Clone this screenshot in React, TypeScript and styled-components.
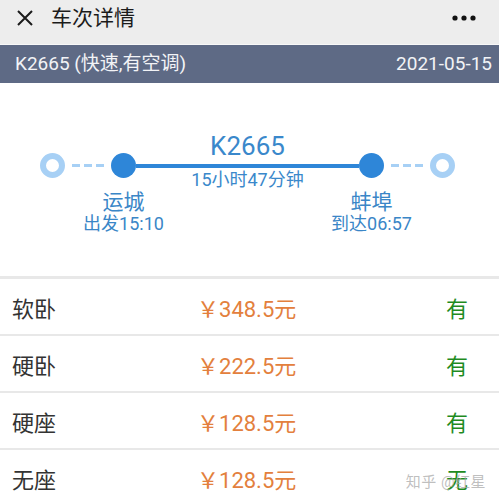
import React from "react";
import styled, { createGlobalStyle } from "styled-components";

const FONT = `Roboto, "Noto Sans CJK SC", sans-serif`;

const GlobalStyle = createGlobalStyle`
  html, body {
    margin: 0;
    padding: 0;
    background: #ffffff;
  }
  body {
    font-family: ${FONT};
    overflow: hidden;
  }
`;

const S = {
    Page: styled.div`
      position: relative;
      width: 499px;
      height: 503px;
      overflow: hidden;
      background: #fff;
    `,
    TopBar: styled.header`
      height: 45px;
      box-sizing: border-box;
      padding: 0 23px 9px 16px;
      display: flex;
      align-items: center;
      background: #ededed;
      border-bottom: 1px solid #f8f8f8;
    `,
    Title: styled.h1`
      margin: 0 0 0 17px;
      flex: 1;
      font-size: 21px;
      font-weight: 400;
      line-height: 26px;
      color: #1b1b1b;
    `,
    TrainBar: styled.div`
      height: 38px;
      padding: 0 7px 0 15px;
      display: flex;
      align-items: center;
      justify-content: space-between;
      background: #5e6a85;
      color: #f2f3f6;
      font-size: 19px;
      line-height: 24px;
    `,
    Route: styled.section`
      height: 196px;
      box-sizing: border-box;
      padding: 50px 44px 0 40px;
      display: flex;
      align-items: flex-start;
      border-bottom: 3px solid #e8e8e8;
    `,
    Endpoint: styled.div`
      flex: none;
      width: 25px;
      height: 25px;
      margin-top: 20px;
      box-sizing: border-box;
      border-radius: 50%;
      border: 6px solid #a7d0f5;
      background: #fff;
    `,
    Dash: styled.div`
      flex: none;
      width: 32px;
      height: 3px;
      margin: 31px 7px 0;
      background: repeating-linear-gradient(
        to right,
        #a7d0f5 0,
        #a7d0f5 8px,
        transparent 8px,
        transparent 12px
      );
    `,
    Stop: styled.div`
      flex: none;
      width: 25px;
      display: flex;
      flex-direction: column;
      align-items: center;
      white-space: nowrap;
      color: #3a86c7;
    `,
    Dot: styled.div`
      width: 25px;
      height: 25px;
      margin-top: 20px;
      border-radius: 50%;
      background: #2e86d8;
    `,
    StationName: styled.div`
      margin-top: 12px;
      font-size: 21px;
      line-height: 24px;
    `,
    StationTime: styled.div`
      margin-top: -1px;
      font-size: 18px;
      line-height: 22px;
    `,
    Middle: styled.div`
      flex: 1;
      display: flex;
      flex-direction: column;
      align-items: center;
      color: #3a88cb;
    `,
    TrainNo: styled.div`
      font-size: 26px;
      line-height: 26px;
    `,
    Line: styled.div`
      align-self: stretch;
      height: 4px;
      margin-top: 5px;
      background: #2e86d8;
    `,
    Duration: styled.div`
      margin-top: 1px;
      font-size: 18px;
      line-height: 22px;
    `,
    SeatRow: styled.div`
      height: 55px;
      padding: 0 31px 0 12px;
      display: grid;
      grid-template-columns: 185px 1fr auto;
      align-items: center;
      border-bottom: 2px solid #e8e8e8;
      font-size: 22px;
    `,
    SeatName: styled.span`
      color: #333;
    `,
    Price: styled.span`
      color: #e3803d;
    `,
    Stock: styled.span`
      color: #1f8b1f;
    `,
    Watermark: styled.div`
      position: absolute;
      right: 13px;
      bottom: 12px;
      font-size: 15px;
      line-height: 18px;
      color: rgba(170, 170, 170, 0.75);
      letter-spacing: 0.5px;
    `,
}

const CloseIcon = () => (
    <svg width="18" height="18" viewBox="0 0 18 18">
        <path d="M2 2 L16 16 M16 2 L2 16" stroke="#1b1b1b" strokeWidth="2" fill="none"/>
    </svg>
)

const MoreIcon = () => (
    <svg width="24" height="6" viewBox="0 0 24 6">
        <circle cx="3" cy="3" r="2.6" fill="#111"/>
        <circle cx="12" cy="3" r="2.6" fill="#111"/>
        <circle cx="21" cy="3" r="2.6" fill="#111"/>
    </svg>
)

const seats = [
    {name: "软卧", price: "348.5", stock: "有"},
    {name: "硬卧", price: "222.5", stock: "有"},
    {name: "硬座", price: "128.5", stock: "有"},
    {name: "无座", price: "128.5", stock: "无"},
]

const App: React.FC = () => {
    return (
        <S.Page>
            <GlobalStyle/>
            <S.TopBar>
                <CloseIcon/>
                <S.Title>车次详情</S.Title>
                <MoreIcon/>
            </S.TopBar>
            <S.TrainBar>
                <span>K2665 (快速,有空调)</span>
                <span>2021-05-15</span>
            </S.TrainBar>
            <S.Route>
                <S.Endpoint/>
                <S.Dash/>
                <S.Stop>
                    <S.Dot/>
                    <S.StationName>运城</S.StationName>
                    <S.StationTime>出发15:10</S.StationTime>
                </S.Stop>
                <S.Middle>
                    <S.TrainNo>K2665</S.TrainNo>
                    <S.Line/>
                    <S.Duration>15小时47分钟</S.Duration>
                </S.Middle>
                <S.Stop>
                    <S.Dot/>
                    <S.StationName>蚌埠</S.StationName>
                    <S.StationTime>到达06:57</S.StationTime>
                </S.Stop>
                <S.Dash/>
                <S.Endpoint/>
            </S.Route>
            {seats.map((s) => (
                <S.SeatRow key={s.name}>
                    <S.SeatName>{s.name}</S.SeatName>
                    <S.Price>￥{s.price}元</S.Price>
                    <S.Stock>{s.stock}</S.Stock>
                </S.SeatRow>
            ))}
            <S.Watermark>知乎 @红星</S.Watermark>
        </S.Page>
    )
}

export default App
